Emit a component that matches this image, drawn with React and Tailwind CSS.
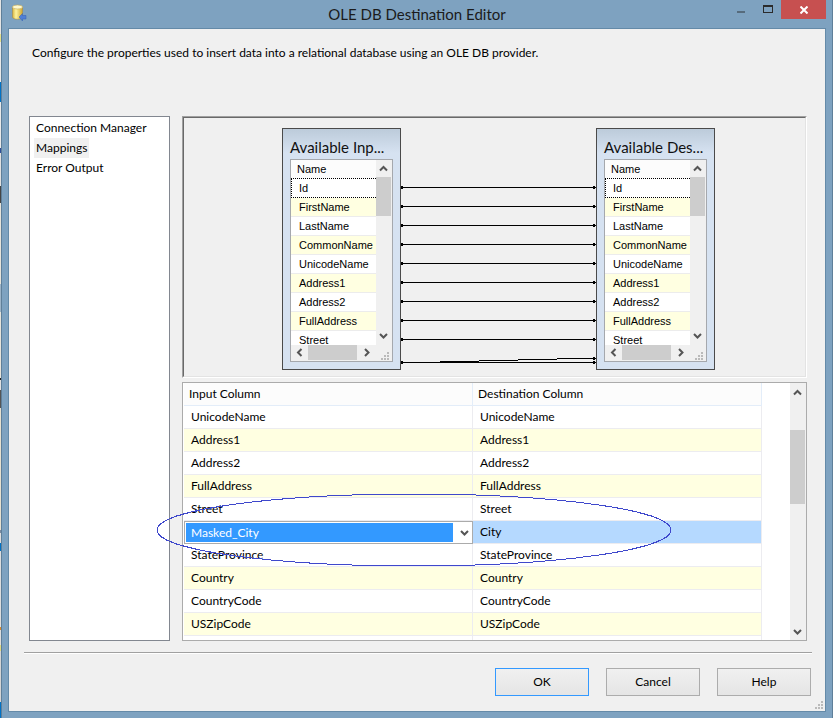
import { useState } from 'react';

const pages = ['Connection Manager', 'Mappings', 'Error Output'];

const columns = [
  'Id',
  'FirstName',
  'LastName',
  'CommonName',
  'UnicodeName',
  'Address1',
  'Address2',
  'FullAddress',
  'Street',
];

const mappings = [
  { input: 'UnicodeName', destination: 'UnicodeName' },
  { input: 'Address1', destination: 'Address1' },
  { input: 'Address2', destination: 'Address2' },
  { input: 'FullAddress', destination: 'FullAddress' },
  { input: 'Street', destination: 'Street' },
  { input: 'Masked_City', destination: 'City' },
  { input: 'StateProvince', destination: 'StateProvince' },
  { input: 'Country', destination: 'Country' },
  { input: 'CountryCode', destination: 'CountryCode' },
  { input: 'USZipCode', destination: 'USZipCode' },
];

const chevrons = {
  up: 'M1 6.5 L4.5 3 L8 6.5',
  down: 'M1 3 L4.5 6.5 L8 3',
  left: 'M6.5 1 L3 4.5 L6.5 8',
  right: 'M3 1 L6.5 4.5 L3 8',
};

function Chevron({ dir }) {
  return (
    <svg width="9" height="9" viewBox="0 0 9 9" fill="none" stroke="#555555" strokeWidth="2" aria-hidden="true">
      <path d={chevrons[dir]} />
    </svg>
  );
}

// Dotted triangle in the bottom right corner of a resizable box
function Grip() {
  return (
    <svg width="9" height="9" viewBox="0 0 9 9" fill="#bababa" shapeRendering="crispEdges" aria-hidden="true">
      <path d="M6 0h2v2h-2z M3 3h2v2h-2z M6 3h2v2h-2z M0 6h2v2h-2z M3 6h2v2h-2z M6 6h2v2h-2z" />
    </svg>
  );
}

function DatabaseIcon() {
  return (
    <svg width="16" height="18" viewBox="0 0 16 18" aria-hidden="true">
      <defs>
        <linearGradient id="cylinder" x1="0" x2="1">
          <stop offset="0" stopColor="#d9b53c" />
          <stop offset="0.35" stopColor="#fdf3a0" />
          <stop offset="1" stopColor="#cfa42c" />
        </linearGradient>
      </defs>
      <path d="M0.500 3v10c0 3 10 3 10 0V3z" fill="url(#cylinder)" stroke="#a88d4a" strokeWidth="0.6" />
      <ellipse cx="5.500" cy="3" rx="5" ry="2" fill="#fdf8cf" stroke="#c2a653" strokeWidth="0.6" />
      <path d="M7 13l3.500-3.500v2h3.500v3.500h-3.500v2z" fill="#4f7fd6" stroke="#3561b5" strokeWidth="0.5" />
    </svg>
  );
}

function TitleBar() {
  return (
    <header className="flex h-7 items-start">
      <div className="flex w-[98px] pt-1 pl-1">
        <DatabaseIcon />
      </div>
      <h1 className="flex-1 text-center text-[15px] leading-7 text-[#1b1b1b]">OLE DB Destination Editor</h1>
      <div className="flex w-[98px]">
        <button aria-label="Minimize" className="flex h-[19px] w-[26px] justify-center pt-[11px]">
          <span className="h-[2px] w-2 bg-[#566b7c]" />
        </button>
        <button aria-label="Maximize" className="flex h-[19px] w-[27px] justify-center pt-[5px]">
          <span className="h-2 w-[10px] border border-t-2 border-[#2b2b2b]" />
        </button>
        <button aria-label="Close" className="flex h-[19px] w-[45px] items-center justify-center bg-[#c75050]">
          <svg width="8" height="8" viewBox="0 0 8 8" stroke="#ffffff" strokeWidth="2" aria-hidden="true">
            <path d="M0.500 0.500L7.500 7.500M7.500 0.500L0.500 7.500" />
          </svg>
        </button>
      </div>
    </header>
  );
}

function ColumnBox({ title }) {
  return (
    <section className="w-[119px] shrink-0 border border-[#4a4a4a] bg-linear-to-b from-[#bccbda] to-[#d6e2f1] to-10% p-[7px]">
      <h2 className="h-[23px] text-[15px] leading-[23px] whitespace-nowrap text-[#111111]">{title}</h2>
      <div className="border border-[#a5a8ad] bg-[#f0f0f0]">
        <div className="flex h-[185px]">
          <div className="min-w-0 flex-1 overflow-hidden bg-white font-['Liberation_Sans',Arial,sans-serif] text-[11px] text-black">
            <div className="h-[18px] bg-[#fcfcfc] pl-[6px] leading-[18px]">Name</div>
            <ul>
              {columns.map((name, i) => (
                <li
                  key={name}
                  className={
                    i === 0
                      ? 'h-5 border-y border-l border-dotted border-black pl-[7px] leading-[18px]'
                      : i % 2
                        ? 'h-[19px] border-b border-[#ececec] bg-[#ffffe1] pl-2 leading-[18px]'
                        : 'h-[19px] border-b border-[#ececec] pl-2 leading-[18px]'
                  }
                >
                  {name}
                </li>
              ))}
            </ul>
          </div>
          <div className="flex w-4 flex-col pr-px">
            <div className="flex h-[17px] items-center justify-center"><Chevron dir="up" /></div>
            <div className="h-[39px] bg-[#cdcdcd]" />
            <div className="mt-auto flex h-[19px] items-center justify-center"><Chevron dir="down" /></div>
          </div>
        </div>
        <div className="flex h-4">
          <div className="flex h-[15px] w-[17px] items-center justify-center"><Chevron dir="left" /></div>
          <div className="h-[15px] w-[49px] bg-[#cdcdcd]" />
          <div className="flex h-[15px] w-[19px] items-center justify-center"><Chevron dir="right" /></div>
          <div className="flex flex-1 items-end justify-center pl-[2px]"><Grip /></div>
        </div>
      </div>
    </section>
  );
}

function Connectors() {
  return (
    <svg className="h-[242px] min-w-0 flex-1" shapeRendering="crispEdges" aria-hidden="true">
      {columns.map((name, i) => (
        <g key={name}>
          <rect x="0" y={59 + i * 19} width="100%" height="1" />
          <rect x="0" y={58 + i * 19} width="2" height="3" />
          <svg x="100%" overflow="visible">
            <rect x="-3" y={58 + i * 19} width="2" height="3" />
          </svg>
        </g>
      ))}
      <rect x="0" y="234" width="100%" height="1" />
      <line x1="0" y1="235" x2="100%" y2="230" stroke="black" strokeWidth="1" />
      <rect x="0" y="233" width="2" height="3" />
      <svg x="100%" overflow="visible">
        <rect x="-3" y="229" width="2" height="3" />
        <rect x="-3" y="233" width="2" height="3" />
      </svg>
    </svg>
  );
}

function MappingGrid() {
  const [selected, setSelected] = useState('Masked_City');

  return (
    <div className="relative flex-1">
      <div className="flex h-full border border-[#ababab] bg-white">
        <div className="h-[257px] min-w-0 flex-1 overflow-hidden pl-px">
          <table className="w-[calc(100%-28px)] table-fixed border-separate border-spacing-0 text-left">
            <thead>
              <tr className="h-[23px] bg-[#fcfcfc]">
                <th className="border-r border-b border-[#e3edf9] p-0 pl-[5px] font-normal">Input Column</th>
                <th className="border-r border-b border-[#e3edf9] p-0 pl-[5px] font-normal">Destination Column</th>
              </tr>
            </thead>
            <tbody>
              {mappings.map((row, i) => {
                const active = row.input === 'Masked_City';
                return (
                  <tr key={row.input} className={`h-[23px] ${i % 2 && !active ? 'bg-[#ffffe1]' : ''}`}>
                    {active ? (
                      <td className="p-0">
                        <div className="flex h-[23px] border border-[#ababab] bg-white p-px">
                          <select
                            aria-label="Input column for City"
                            value={selected}
                            onChange={(e) => setSelected(e.target.value)}
                            className="min-w-0 flex-1 appearance-none bg-[#3399ff] pl-[5px] leading-4 text-white outline-none"
                          >
                            {mappings.map((m) => (
                              <option key={m.input}>{m.input}</option>
                            ))}
                          </select>
                          <span className="flex w-[18px] items-center justify-end pr-[2px]">
                            <Chevron dir="down" />
                          </span>
                        </div>
                      </td>
                    ) : (
                      <td className="border-r border-b border-[#ececf0] p-0 pl-[7px]">{row.input}</td>
                    )}
                    <td className={`border-r border-b border-[#ececf0] p-0 pl-[7px] ${active ? 'bg-[#b5d9ff]' : ''}`}>
                      {row.destination}
                    </td>
                  </tr>
                );
              })}
              <tr className="h-[23px]">
                <td className="border-r border-[#ececf0] p-0" />
                <td className="border-r border-[#ececf0] p-0" />
              </tr>
            </tbody>
          </table>
        </div>
        <div className="flex w-4 flex-col bg-[#f0f0f0] pr-px">
          <div className="flex h-[18px] items-center justify-center"><Chevron dir="up" /></div>
          <div className="mt-[29px] h-[74px] bg-[#cdcdcd]" />
          <div className="mt-auto flex h-[17px] items-center justify-center"><Chevron dir="down" /></div>
        </div>
      </div>

      {/* Pen mark around the City row */}
      <svg
        className="pointer-events-none absolute top-[111px] -left-[26px]"
        width="516"
        height="75"
        fill="none"
        stroke="#3f48cc"
        shapeRendering="crispEdges"
        aria-hidden="true"
      >
        <ellipse cx="258" cy="37" rx="257" ry="36" />
      </svg>
    </div>
  );
}

export default function App() {
  const [page, setPage] = useState('Mappings');

  return (
    <div className="flex min-h-screen bg-[#7ea2c0] font-[Lato,'Segoe_UI',sans-serif] text-[12px] text-black">
      {/* Sliver of the windows behind the dialog */}
      <div className="w-px bg-[linear-gradient(#e4e4e4_34px,#e5e08a_34px_42px,#e9e9e9_42px_82px,#0072c6_82px_102px,#e9e9e9_102px_148px,#2f4f9a_148px_153px,#e0e0e0_153px_186px,#454545_186px_203px,#e6e3da_203px_284px,#9db4c8_284px_312px,#e6e3da_312px_378px,#222222_378px_380px,#e0e0e0_380px_390px,#555555_390px_408px,#e6e0cf_408px_530px,#7b8aa0_530px_533px,#dddddd_533px_543px,#0072c6_543px_551px,#dddddd_551px_627px,#d98a2b_627px_630px,#dddddd_630px_645px,#e0da80_645px_651px,#d4d4d4_651px_702px,#0072c6_702px)]" />
      <div className="flex min-w-0 flex-1 flex-col border-x border-[#5f7f99] px-[6px] pb-[6px]">
        <TitleBar />
        <main className="flex flex-1 flex-col border border-[#648aa8] bg-[#f0f0f0]">
          <p className="h-[87px] pt-4 pl-[23px] leading-4">
            Configure the properties used to insert data into a relational database using an OLE DB provider.
          </p>

          <div className="flex flex-1 gap-3 pr-[18px] pl-5">
            <nav className="w-[141px] shrink-0 border border-[#828790] bg-white px-1 py-px">
              {pages.map((name) => (
                <button
                  key={name}
                  onClick={() => setPage(name)}
                  className={`block h-5 px-[2px] leading-5 ${page === name ? 'bg-[#f0f0f0]' : ''}`}
                >
                  {name}
                </button>
              ))}
            </nav>

            <div className="flex min-w-0 flex-1 flex-col gap-1">
              <div className="border border-t-[#a0a0a0] border-r-white border-b-white border-l-[#a0a0a0]">
                <div className="flex border border-t-[#696969] border-r-[#e3e3e3] border-b-[#e3e3e3] border-l-[#696969] pt-[10px] pr-[90px] pb-[6px] pl-[98px]">
                  <ColumnBox title="Available Inp..." />
                  <Connectors />
                  <ColumnBox title="Available Des..." />
                </div>
              </div>
              <MappingGrid />
            </div>
          </div>

          <footer className="mt-[11px] pr-[13px] pl-[15px]">
            <div className="h-[2px] border-t border-[#a0a0a0] bg-white" />
            <div className="flex justify-end gap-[17px] pt-[14px] pr-px">
              <button className="h-7 w-[94px] border border-[#3399ff] bg-linear-to-b from-[#f0f0f0] to-[#e5e5e5]">OK</button>
              <button className="h-7 w-[94px] border border-[#acacac] bg-linear-to-b from-[#f0f0f0] to-[#e5e5e5]">Cancel</button>
              <button className="h-7 w-[94px] border border-[#acacac] bg-linear-to-b from-[#f0f0f0] to-[#e5e5e5]">Help</button>
            </div>
          </footer>
          <div className="flex h-[15px] items-end justify-end p-px">
            <Grip />
          </div>
        </main>
      </div>
    </div>
  );
}
